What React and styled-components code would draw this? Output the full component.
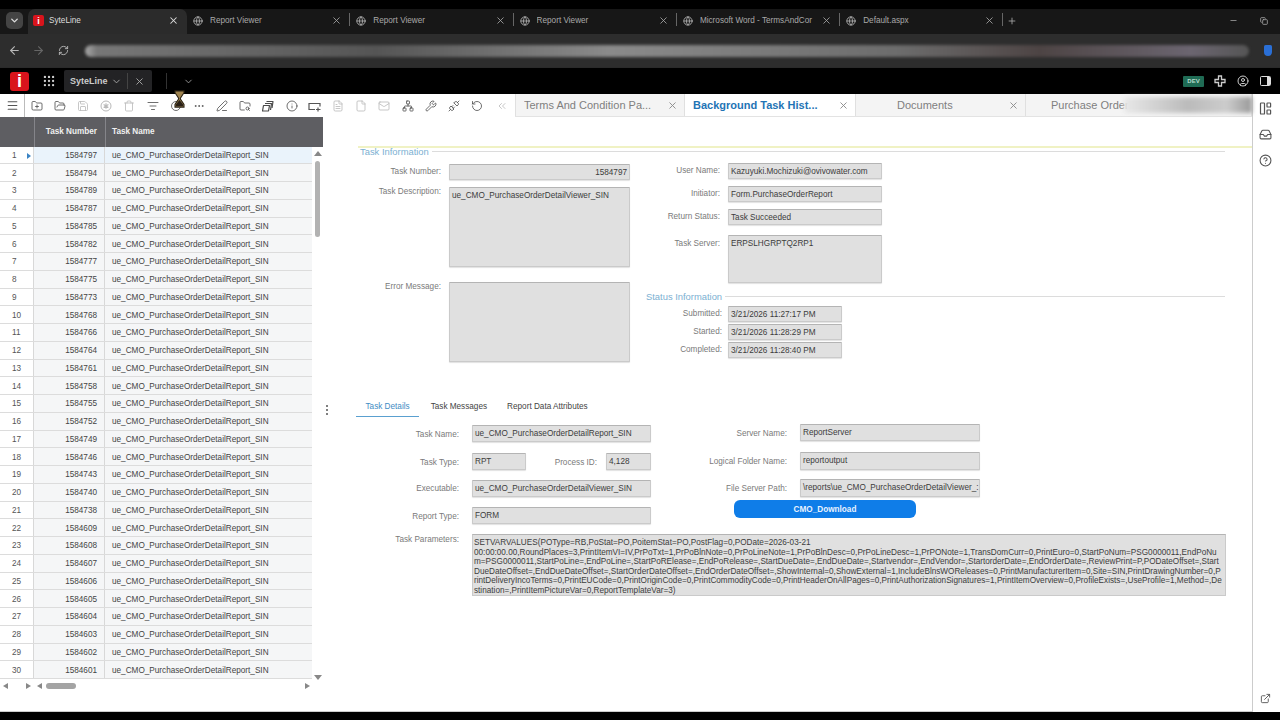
import React from 'react';
import styled, { createGlobalStyle } from 'styled-components';
import {
  ChevronDown, X, Globe, ArrowLeft, ArrowRight, RefreshCw, Grip, CircleUser, Plus, Minus,
  Menu, FolderPlus, FolderOpen, Save, Trash, ListFilter, RotateCw, MoreHorizontal, PenLine,
  FolderSearch, Info, FileText, File, Mail, Network, Wrench, Unplug, RotateCcw, ChevronsLeft,
  Inbox, CircleHelp, ExternalLink, Copy,
} from 'lucide-react';

const Global = createGlobalStyle`
  html, body { margin: 0; padding: 0; background: #fff; }
  * { box-sizing: border-box; }
  body { font-family: "Liberation Sans", Arial, sans-serif; }
`;

const TEXT = '8.2px';

const Page = styled.div`
  width: 1280px; height: 720px; display: flex; flex-direction: column; overflow: hidden; background: #fff;
`;
const TopEdge = styled.div`height: 9px; background: #000; flex: none;`;
const TabStrip = styled.div`
  height: 25px; flex: none; background: #171717; display: flex; align-items: stretch; padding-left: 6px; position: relative;
`;
const TabMenu = styled.div`
  width: 17px; height: 17px; margin-top: 3px; margin-right: 5px; border-radius: 5px; background: #444; color: #ddd;
  display: flex; align-items: center; justify-content: center;
`;
const ChromeTab = styled.div`
  width: ${p => p.$w || 163.3}px; display: flex; align-items: center; padding: 0 8px 2px ${p => p.$active ? 4 : 6}px; color: ${p => p.$active ? '#ddd' : '#a9a9a9'};
  background: ${p => p.$active ? '#2b2b2b' : 'transparent'}; border-radius: ${p => p.$active ? '7px 7px 0 0' : '0'};
  font-size: ${TEXT}; position: relative;
  &::after {
    content: ''; display: ${p => p.$active ? 'none' : 'block'}; position: absolute; right: 0; top: 4px; height: 13px; width: 1px; background: #666;
  }
`;
const Favicon = styled.span`
  width: 11px; height: 11px; background: #d8141c; color: #fff; border-radius: 2px; font-size: 9px; font-weight: 700;
  display: inline-flex; align-items: center; justify-content: center; margin-right: 5px; margin-left: 1px; flex: none;
`;
const TabTitle = styled.span`flex: 1; margin-left: ${p => p.$ml ?? 7}px; white-space: nowrap; overflow: hidden;`;
const NewTab = styled.div`
  color: #aaa; width: 18px; display: flex; align-items: center; justify-content: center; padding-bottom: 2px;
`;
const WindowButtons = styled.div`
  margin-left: auto; display: flex; align-items: center; gap: 22.5px; padding: 0 12px 2px 0; color: #aaa;
`;
const AddressBar = styled.div`
  height: 33px; flex: none; background: #2d2d2d; display: flex; align-items: center; padding: 0 8px; color: #b5b5b5;
`;
const NavSlot = styled.div`
  width: ${p => p.$w}px; display: flex; justify-content: center; color: ${p => p.$dim ? '#666' : '#b8b8b8'};
`;
const UrlPill = styled.div`
  width: 1170px; height: 12px; margin-left: 13px; border-radius: 7px; filter: blur(1.6px);
  background: linear-gradient(90deg, #aaa 0, #777 1%, #555 25%, #8a8a8a 45%, #6c6c6c 70%, #4d4444 82%, #6b6570 95%, #555 100%);
`;
const Shield = styled.div`
  margin-left: 15px; width: 8px; height: 11px; background: #2a6fd6; border-radius: 2px 2px 5px 5px;
`;
const AppBar = styled.div`
  height: 27px; flex: none; background: #000; display: flex; align-items: center; color: #bbb; border-top: 1px solid #2a2a2a;
`;
const Logo = styled.div`
  width: 19px; height: 19px; margin-left: 10px; background: #d9141c; color: #fff; border-radius: 3px; font-size: 18px; font-weight: 700;
  display: flex; align-items: center; justify-content: center;
`;
const AppGrid = styled.div`margin-left: 12px; width: 16px; display: flex; justify-content: center; color: #ccc;`;
const AppChip = styled.div`
  margin-left: 7px; width: 88px; height: 22px; background: #232325; border-radius: 2px; display: flex; align-items: center; padding-left: 6px;
  font-size: 9px; font-weight: 700; color: #ccc;
`;
const ChipLabel = styled.span`width: 41px;`;
const ChipDivider = styled.span`width: 1px; height: 16px; background: #444; margin: 0 6px 0 5px;`;
const BarDivider = styled.span`width: 1px; height: 16px; background: #333; margin-left: 14px;`;
const BarChevron = styled.div`margin-left: 16px; display: flex; color: #999;`;
const AppRight = styled.div`margin-left: auto; display: flex; align-items: center; color: #ccc; padding-right: 3px;`;
const DevBadge = styled.div`
  width: 21px; height: 11px; margin-right: 4px; background: #1f6b54; color: #b7dacd; font-size: 6px; font-weight: 700; display: flex; align-items: center; justify-content: center; border-radius: 1px;
`;
const AppIconSlot = styled.div`width: 23px; display: flex; justify-content: center;`;

const Main = styled.div`flex: 1; min-height: 0; display: flex;`;
const Workspace = styled.div`flex: 1; min-width: 0; display: flex; flex-direction: column;`;
const ToolRow = styled.div`height: 23px; flex: none; display: flex;`;
const Toolbar = styled.div`width: 515px; display: flex; align-items: center;`;
const MenuCell = styled.div`
  width: 25px; height: 100%; border-right: 1px solid #bbb; display: flex; align-items: center; justify-content: center; color: #555;
`;
const ToolIcon = styled.div`
  width: 23.2px; flex: none; display: flex; justify-content: center; color: ${p => p.$off ? '#b9b9b9' : '#4a4a4a'}; position: relative;
`;
const Hourglass = styled.svg`position: absolute; left: 8px; top: -10px;`;
const BackChevrons = styled.span`padding-left: 3px; display: flex;`;
const DocTabs = styled.div`flex: 1; display: flex; background: #f4f4f4; border-bottom: 1px solid #e3e3e3; position: relative;`;
const DocTab = styled.div`
  width: ${p => p.$w}px; flex: none; display: flex; align-items: center; padding: 0 6px 0 8px; font-size: 11px;
  border-right: 1px solid #e0e0e0; border-left: ${p => p.$first ? '1px solid #e0e0e0' : 'none'};
  background: ${p => p.$active ? '#fff' : 'transparent'}; color: ${p => p.$active ? '#1f74b5' : '#7f7f7f'}; font-weight: ${p => p.$active ? 700 : 400};
`;
const DocTitle = styled.span`flex: 1; padding: ${p => p.$pad || 0}; white-space: nowrap; overflow: hidden;`;
const DocClose = styled.div`display: flex; color: #8a8a8a; flex: none;`;
const BlurOver = styled.div`
  position: absolute; right: 0; top: 3px; bottom: 3px; width: 128px; background: linear-gradient(90deg, #e8e8e8, #bbb 50%, #ccc 80%, #999); filter: blur(2px);
`;
const Content = styled.div`flex: 1; min-height: 0; display: flex; border-bottom: 1px solid #ccc;`;

const GridPanel = styled.div`width: 323px; flex: none; display: flex; flex-direction: column;`;
const GridHead = styled.div`
  height: 29.5px; flex: none; background: #5e5e62; color: #f0f0f0; font-size: ${TEXT}; font-weight: 700; display: flex; align-items: center;
`;
const HeadCell = styled.div`
  width: ${p => p.$w}px; flex: ${p => p.$w ? 'none' : 1}; height: 100%; display: flex; align-items: center;
  justify-content: ${p => p.$right ? 'flex-end' : 'flex-start'}; padding: 0 8px 0 6px;
  border-left: ${p => p.$line ? '1px solid #85858a' : 'none'};
`;
const GridBody = styled.div`display: flex; height: 533px; flex: none;`;
const Rows = styled.div`flex: 1; min-width: 0;`;
const Row = styled.div`
  height: 17.76px; display: flex; align-items: center; font-size: ${TEXT}; color: #444; border-bottom: 1px solid #dcdcdc;
  background: ${p => p.$sel ? '#eaf3fb' : '#f5f6f7'};
`;
const RowNum = styled.div`
  width: 34px; flex: none; height: 100%; display: flex; align-items: center; background: #fff; color: #555; padding: 1px 0 0 12px; position: relative;
  border-right: 1px solid #d8d8d8;
`;
const RowArrow = styled.span`
  position: absolute; left: 27px; top: 6px; border-left: 4px solid #3b84c4; border-top: 3px solid transparent; border-bottom: 3px solid transparent;
`;
const NumCell = styled.div`width: 71px; flex: none; padding: 1px 7px 0 0; border-right: 1px solid #d8d8d8; height: 100%; display: flex; align-items: center; justify-content: flex-end;`;
const NameCell = styled.div`flex: 1; padding: 1px 0 0 7px; white-space: nowrap;`;
const VScroll = styled.div`width: 11px; flex: none; display: flex; flex-direction: column; align-items: center; padding-top: 4px;`;
const ArrowUp = styled.span`border-bottom: 5px solid #888; border-left: 4px solid transparent; border-right: 4px solid transparent;`;
const ArrowDown = styled.span`margin-top: auto; border-top: 5px solid #888; border-left: 4px solid transparent; border-right: 4px solid transparent;`;
const VThumb = styled.div`width: 5px; height: 76px; margin-top: 5px; background: #b2b2b2; border-radius: 3px;`;
const HScroll = styled.div`height: 12px; flex: none; display: flex; align-items: center; padding-left: 3px;`;
const ArrowL = styled.span`margin-left: ${p => p.$ml || 0}px; border-right: 5px solid #888; border-top: 3.5px solid transparent; border-bottom: 3.5px solid transparent;`;
const ArrowR = styled.span`margin-left: ${p => p.$ml || 0}px; border-left: 5px solid #888; border-top: 3.5px solid transparent; border-bottom: 3.5px solid transparent;`;
const HThumb = styled.div`width: 30px; height: 6px; margin-left: 4px; background: #a4a4a4; border-radius: 3px;`;

const Splitter = styled.div`width: 8px; flex: none; padding-top: 288px; display: flex; justify-content: center; color: #555;`;
const SplitDots = styled.div`display: flex; flex-direction: column; gap: 2px;`;
const SplitDot = styled.span`width: 2px; height: 2px; background: #555; border-radius: 50%;`;

const FormPanel = styled.div`flex: 1; min-width: 0; margin-left: 27px; padding-top: 29px;`;
const Notice = styled.div`height: 2px; background: #f0f2c4;`;
const SectionHead = styled.div`
  height: 10px; width: ${p => p.$w}px; margin-top: ${p => p.$mt || 0}px; padding-left: ${p => p.$pl || 0}px; display: flex; align-items: center; gap: 3px;
  color: #7cb0d2; font-size: 9.4px; white-space: nowrap;
`;
const SectionRule = styled.span`flex: 1; height: 1px; background: #dcdcdc;`;
const InfoBody = styled.div`display: flex; width: 867px; padding-top: 0.5px;`;
const Column = styled.div`width: ${p => p.$w}px; flex: ${p => p.$w ? 'none' : 1}; display: flex; flex-direction: column;`;
const Field = styled.div`display: flex; margin-top: ${p => p.$mt || 0}px; align-items: flex-start;`;
const Label = styled.div`
  width: ${p => p.$w}px; flex: none; text-align: right; color: #7a7a7a; font-size: ${TEXT}; padding-top: ${p => p.$pt ?? 3}px; margin-right: ${p => p.$gap ?? 8}px; white-space: nowrap;
`;
const Input = styled.div`
  width: ${p => p.$w}px; height: ${p => p.$h || 16}px; flex: none; background: #e0e0e0; border: 1px solid #cacaca; border-top-color: #b4b4b4; border-radius: 1px;
  color: #3c3c3c; font-size: ${TEXT}; padding: 3px 2px; text-align: ${p => p.$right ? 'right' : 'left'}; white-space: nowrap; overflow: hidden;
  box-shadow: 0 1px 1px rgba(0,0,0,.12);
`;
const TaskTabs = styled.div`display: flex; margin-top: 37px; margin-left: -2px; height: 18px;`;
const TaskTab = styled.div`
  padding: 3px 9.5px 0; margin-right: ${p => p.$mr || 0}px; font-size: ${TEXT}; color: ${p => p.$active ? '#3f8cc4' : '#444'};
  border-bottom: ${p => p.$active ? '1px solid #5aa0d0' : 'none'};
`;
const DetailBody = styled.div`display: flex;`;
const Download = styled.div`
  width: 182px; height: 18px; margin-top: 3px; margin-left: 83px; padding-top: 1px; background: #0f7de8; color: #e8f2ff; border-radius: 6px; font-size: ${TEXT}; font-weight: 700;
  display: flex; align-items: center; justify-content: center;
`;
const ParamBox = styled.div`
  width: 754px; height: 62px; flex: none; background: #e0e0e0; border: 1px solid #cacaca; border-top-color: #b4b4b4; color: #3c3c3c; font-size: ${TEXT}; line-height: 9.6px; padding: 3.5px 1px 0; white-space: pre; overflow: hidden;
`;

const Rail = styled.div`
  width: 28px; flex: none; border-left: 1px solid #ccc; display: flex; flex-direction: column; align-items: center; padding: 1px 2px 8px 0; color: #555; background: #fff;
`;
const RailIcon = styled.div`height: 26px; display: flex; align-items: center;`;
const RailLink = styled.div`margin-top: auto; display: flex;`;
const BottomEdge = styled.div`height: 8px; flex: none; background: #000;`;

const ids = [1584797,1584794,1584789,1584787,1584785,1584782,1584777,1584775,1584773,1584768,1584766,1584764,1584761,1584758,1584755,1584752,1584749,1584746,1584743,1584740,1584738,1584609,1584608,1584607,1584606,1584605,1584604,1584603,1584602,1584601];

const S = 12; const SW = 1.6;

const CircleStar = ({ size }) => (
  <svg width={size} height={size} viewBox="0 0 12 12" fill="none" stroke="currentColor" strokeWidth="1">
    <circle cx="6" cy="6" r="5" />
    <path d="M6 3.2v5.6M3.6 4.6l4.8 2.8M8.4 4.6L3.6 7.4" strokeWidth="1.1" />
  </svg>
);
const StackedBoxes = ({ size }) => (
  <svg width={size} height={size} viewBox="0 0 12 12" fill="none" stroke="currentColor" strokeWidth="1.2" strokeLinejoin="round">
    <path d="M4.5 1.5h6.5l-1 6.5" />
    <path d="M3 3.5h6.5l-1 6.5" />
    <path d="M1.5 5.5h6l-1 5.5h-6z" fill="#fff" />
  </svg>
);
const PlusBox = () => (
  <svg width="13" height="12" viewBox="0 0 13 12" fill="none" stroke="#555" strokeWidth="1.2"><path d="M7 9.5H1v-6h11v3M10 7.5v4M8 9.5h4.5" /></svg>
);

const tools = [
  [FolderPlus], [FolderOpen], [Save, 1], [CircleStar, 1], [Trash, 1], [ListFilter], [RotateCw, 0, 1], [MoreHorizontal], [PenLine], [FolderSearch], [StackedBoxes], [Info], [PlusBox], [FileText, 1], [File, 1], [Mail, 1], [Network], [Wrench], [Unplug], [RotateCcw],
];

const params = `SETVARVALUES(POType=RB,PoStat=PO,PoitemStat=PO,PostFlag=0,PODate=2026-03-21
00:00:00.00,RoundPlaces=3,PrintItemVI=IV,PrPoTxt=1,PrPoBlnNote=0,PrPoLineNote=1,PrPoBlnDesc=0,PrPoLineDesc=1,PrPONote=1,TransDomCurr=0,PrintEuro=0,StartPoNum=PSG0000011,EndPoNu
m=PSG0000011,StartPoLine=,EndPoLine=,StartPoRElease=,EndPoRelease=,StartDueDate=,EndDueDate=,Startvendor=,EndVendor=,StartorderDate=,EndOrderDate=,ReviewPrint=P,PODateOffset=,Start
DueDateOffset=,EndDueDateOffset=,StartOrderDateOffset=,EndOrderDateOffset=,ShowInternal=0,ShowExternal=1,IncludeBlnsWOReleases=0,PrintManufacturerItem=0,Site=SIN,PrintDrawingNumber=0,P
rintDeliveryIncoTerms=0,PrintEUCode=0,PrintOriginCode=0,PrintCommodityCode=0,PrintHeaderOnAllPages=0,PrintAuthorizationSignatures=1,PrintItemOverview=0,ProfileExists=,UseProfile=1,Method=,De
stination=,PrintItemPictureVar=0,ReportTemplateVar=3)`;

const browserTabs = ['Report Viewer', 'Report Viewer', 'Report Viewer', 'Microsoft Word - TermsAndCor', 'Default.aspx'];

export default function App() {
  return (
    <Page>
      <Global />
      <TopEdge />
      <TabStrip>
        <TabMenu><ChevronDown size={11} strokeWidth={3} /></TabMenu>
        <ChromeTab $active $w={159}>
          <Favicon>i</Favicon>
          <TabTitle $ml={0}>SyteLine</TabTitle>
          <X size={11} strokeWidth={2.2} color="#ddd" />
        </ChromeTab>
        {browserTabs.map((t, i) => (
          <ChromeTab key={i}>
            <Globe size={10} strokeWidth={2.2} />
            <TabTitle>{t}</TabTitle>
            <X size={11} strokeWidth={1.8} />
          </ChromeTab>
        ))}
        <NewTab><Plus size={10} /></NewTab>
        <WindowButtons><Minus size={9} /><Copy size={8} strokeWidth={2.4} /></WindowButtons>
      </TabStrip>
      <AddressBar>
        <NavSlot $w={14}><ArrowLeft size={13} /></NavSlot>
        <NavSlot $w={34} $dim><ArrowRight size={13} /></NavSlot>
        <NavSlot $w={16}><RefreshCw size={11} /></NavSlot>
        <UrlPill />
        <Shield />
      </AddressBar>
      <AppBar>
        <Logo>i</Logo>
        <AppGrid><Grip size={14} /></AppGrid>
        <AppChip>
          <ChipLabel>SyteLine</ChipLabel>
          <ChevronDown size={11} color="#aaa" />
          <ChipDivider />
          <X size={11} color="#aaa" />
        </AppChip>
        <BarDivider />
        <BarChevron><ChevronDown size={11} /></BarChevron>
        <AppRight>
          <DevBadge>DEV</DevBadge>
          <AppIconSlot>
            <svg width="12" height="12" viewBox="0 0 12 12" fill="none" stroke="#ccc" strokeWidth="1.3"><path d="M4.5 1h3v3.5H11v3H7.5V11h-3V7.5H1v-3h3.5z" /></svg>
          </AppIconSlot>
          <AppIconSlot><CircleUser size={12} /></AppIconSlot>
          <AppIconSlot>
            <svg width="11" height="10" viewBox="0 0 11 10"><rect x=".5" y=".5" width="10" height="9" rx="1" fill="#000" stroke="#ddd" /><rect x="7" y="1" width="3" height="8" fill="#ddd" /></svg>
          </AppIconSlot>
        </AppRight>
      </AppBar>
      <Main>
        <Workspace>
          <ToolRow>
            <Toolbar>
              <MenuCell><Menu size={13} /></MenuCell>
              {tools.map(([I, off, hour], i) => (
                <ToolIcon key={i} $off={off}>
                  <I size={S} strokeWidth={SW} />
                  {hour && (
                    <Hourglass width="15" height="18" viewBox="0 0 16 20">
                      <path d="M3 1h10v2L9 9v1l4 6v3H3v-3l4-6V9L3 3z" fill="#a08550" stroke="#2b2316" strokeWidth="1.2" />
                      <path d="M4 16l4-5 4 5v2H4z" fill="#2a2118" />
                    </Hourglass>
                  )}
                </ToolIcon>
              ))}
              <ToolIcon $off><BackChevrons><ChevronsLeft size={S} strokeWidth={SW} /></BackChevrons></ToolIcon>
            </Toolbar>
            <DocTabs>
              <DocTab $first $w={170}><DocTitle>Terms And Condition Pa...</DocTitle><DocClose><X size={11} /></DocClose></DocTab>
              <DocTab $active $w={171}><DocTitle>Background Task Hist...</DocTitle><DocClose><X size={11} /></DocClose></DocTab>
              <DocTab $w={170}><DocTitle $pad="0 0 0 33px">Documents</DocTitle><DocClose><X size={11} /></DocClose></DocTab>
              <DocTab $w={226}><DocTitle $pad="0 0 0 17px">Purchase Order</DocTitle></DocTab>
              <BlurOver />
            </DocTabs>
          </ToolRow>
          <Content>
            <GridPanel>
              <GridHead>
                <HeadCell $w={34} />
                <HeadCell $w={71} $line $right>Task Number</HeadCell>
                <HeadCell $line>Task Name</HeadCell>
              </GridHead>
              <GridBody>
                <Rows>
                  {ids.map((id, i) => (
                    <Row key={id} $sel={i === 0}>
                      <RowNum>{i + 1}{i === 0 && <RowArrow />}</RowNum>
                      <NumCell>{id}</NumCell>
                      <NameCell>ue_CMO_PurchaseOrderDetailReport_SIN</NameCell>
                    </Row>
                  ))}
                </Rows>
                <VScroll>
                  <ArrowUp />
                  <VThumb />
                  <ArrowDown />
                </VScroll>
              </GridBody>
              <HScroll>
                <ArrowL />
                <ArrowR $ml={18} />
                <ArrowL $ml={6} />
                <HThumb />
                <ArrowR $ml={229} />
              </HScroll>
            </GridPanel>
            <Splitter><SplitDots><SplitDot /><SplitDot /><SplitDot /></SplitDots></Splitter>
            <FormPanel>
              <Notice />
              <SectionHead $w={867} $pl={2} $mt={-2}>Task Information<SectionRule /></SectionHead>
              <InfoBody>
                <Column $w={272}>
                  <Field $mt={7}><Label $w={83}>Task Number:</Label><Input $w={181} $right>1584797</Input></Field>
                  <Field $mt={7}><Label $w={83} $pt={0}>Task Description:</Label><Input $w={181} $h={80}>ue_CMO_PurchaseOrderDetailViewer_SIN</Input></Field>
                  <Field $mt={15}><Label $w={83} $pt={0}>Error Message:</Label><Input $w={181} $h={80} /></Field>
                </Column>
                <Column>
                  <Field $mt={6}><Label $w={90}>User Name:</Label><Input $w={154}>Kazuyuki.Mochizuki@ovivowater.com</Input></Field>
                  <Field $mt={7}><Label $w={90}>Initiator:</Label><Input $w={154}>Form.PurchaseOrderReport</Input></Field>
                  <Field $mt={7}><Label $w={90}>Return Status:</Label><Input $w={154}>Task Succeeded</Input></Field>
                  <Field $mt={10}><Label $w={90} $pt={4}>Task Server:</Label><Input $w={154} $h={48}>ERPSLHGRPTQ2RP1</Input></Field>
                  <SectionHead $mt={9} $pl={16}>Status Information<SectionRule /></SectionHead>
                  <Field $mt={4}><Label $w={92} $gap={6}>Submitted:</Label><Input $w={114}>3/21/2026 11:27:17 PM</Input></Field>
                  <Field $mt={2}><Label $w={92} $gap={6}>Started:</Label><Input $w={114}>3/21/2026 11:28:29 PM</Input></Field>
                  <Field $mt={2}><Label $w={92} $gap={6}>Completed:</Label><Input $w={114}>3/21/2026 11:28:40 PM</Input></Field>
                </Column>
              </InfoBody>
              <TaskTabs>
                <TaskTab $active $mr={2}>Task Details</TaskTab>
                <TaskTab $mr={1}>Task Messages</TaskTab>
                <TaskTab>Report Data Attributes</TaskTab>
              </TaskTabs>
              <DetailBody>
                <Column $w={293}>
                  <Field $mt={8}><Label $w={101} $gap={13} $pt={5}>Task Name:</Label><Input $w={179} $h={17}>ue_CMO_PurchaseOrderDetailReport_SIN</Input></Field>
                  <Field $mt={11}>
                    <Label $w={101} $gap={13} $pt={5}>Task Type:</Label><Input $w={54} $h={17}>RPT</Input>
                    <Label $w={71} $gap={9} $pt={5}>Process ID:</Label><Input $w={45} $h={17}>4,128</Input>
                  </Field>
                  <Field $mt={10}><Label $w={101} $gap={13} $pt={4}>Executable:</Label><Input $w={179} $h={17}>ue_CMO_PurchaseOrderDetailViewer_SIN</Input></Field>
                  <Field $mt={10}><Label $w={101} $gap={13} $pt={5}>Report Type:</Label><Input $w={179} $h={17}>FORM</Input></Field>
                </Column>
                <Column>
                  <Field $mt={7}><Label $w={136} $gap={13} $pt={5}>Server Name:</Label><Input $w={180} $h={17}>ReportServer</Input></Field>
                  <Field $mt={11}><Label $w={136} $gap={13} $pt={5}>Logical Folder Name:</Label><Input $w={180} $h={18}>reportoutput</Input></Field>
                  <Field $mt={9}><Label $w={136} $gap={13} $pt={5}>File Server Path:</Label><Input $w={180} $h={18}>\reports\ue_CMO_PurchaseOrderDetailViewer_:</Input></Field>
                  <Download>CMO_Download</Download>
                </Column>
              </DetailBody>
              <Field $mt={10}><Label $w={101} $gap={13} $pt={1}>Task Parameters:</Label><ParamBox>{params}</ParamBox></Field>
            </FormPanel>
          </Content>
        </Workspace>
        <Rail>
          <RailIcon>
            <svg width="13" height="13" viewBox="0 0 13 13" fill="none" stroke="currentColor" strokeWidth="1.2">
              <rect x="1.5" y="1" width="4" height="11" rx=".6" />
              <rect x="8" y="1" width="3.6" height="4" rx=".6" />
              <rect x="8" y="8" width="3.6" height="4" rx=".6" />
            </svg>
          </RailIcon>
          <RailIcon><Inbox size={13} /></RailIcon>
          <RailIcon><CircleHelp size={13} /></RailIcon>
          <RailLink><ExternalLink size={11} /></RailLink>
        </Rail>
      </Main>
      <BottomEdge />
    </Page>
  );
}
